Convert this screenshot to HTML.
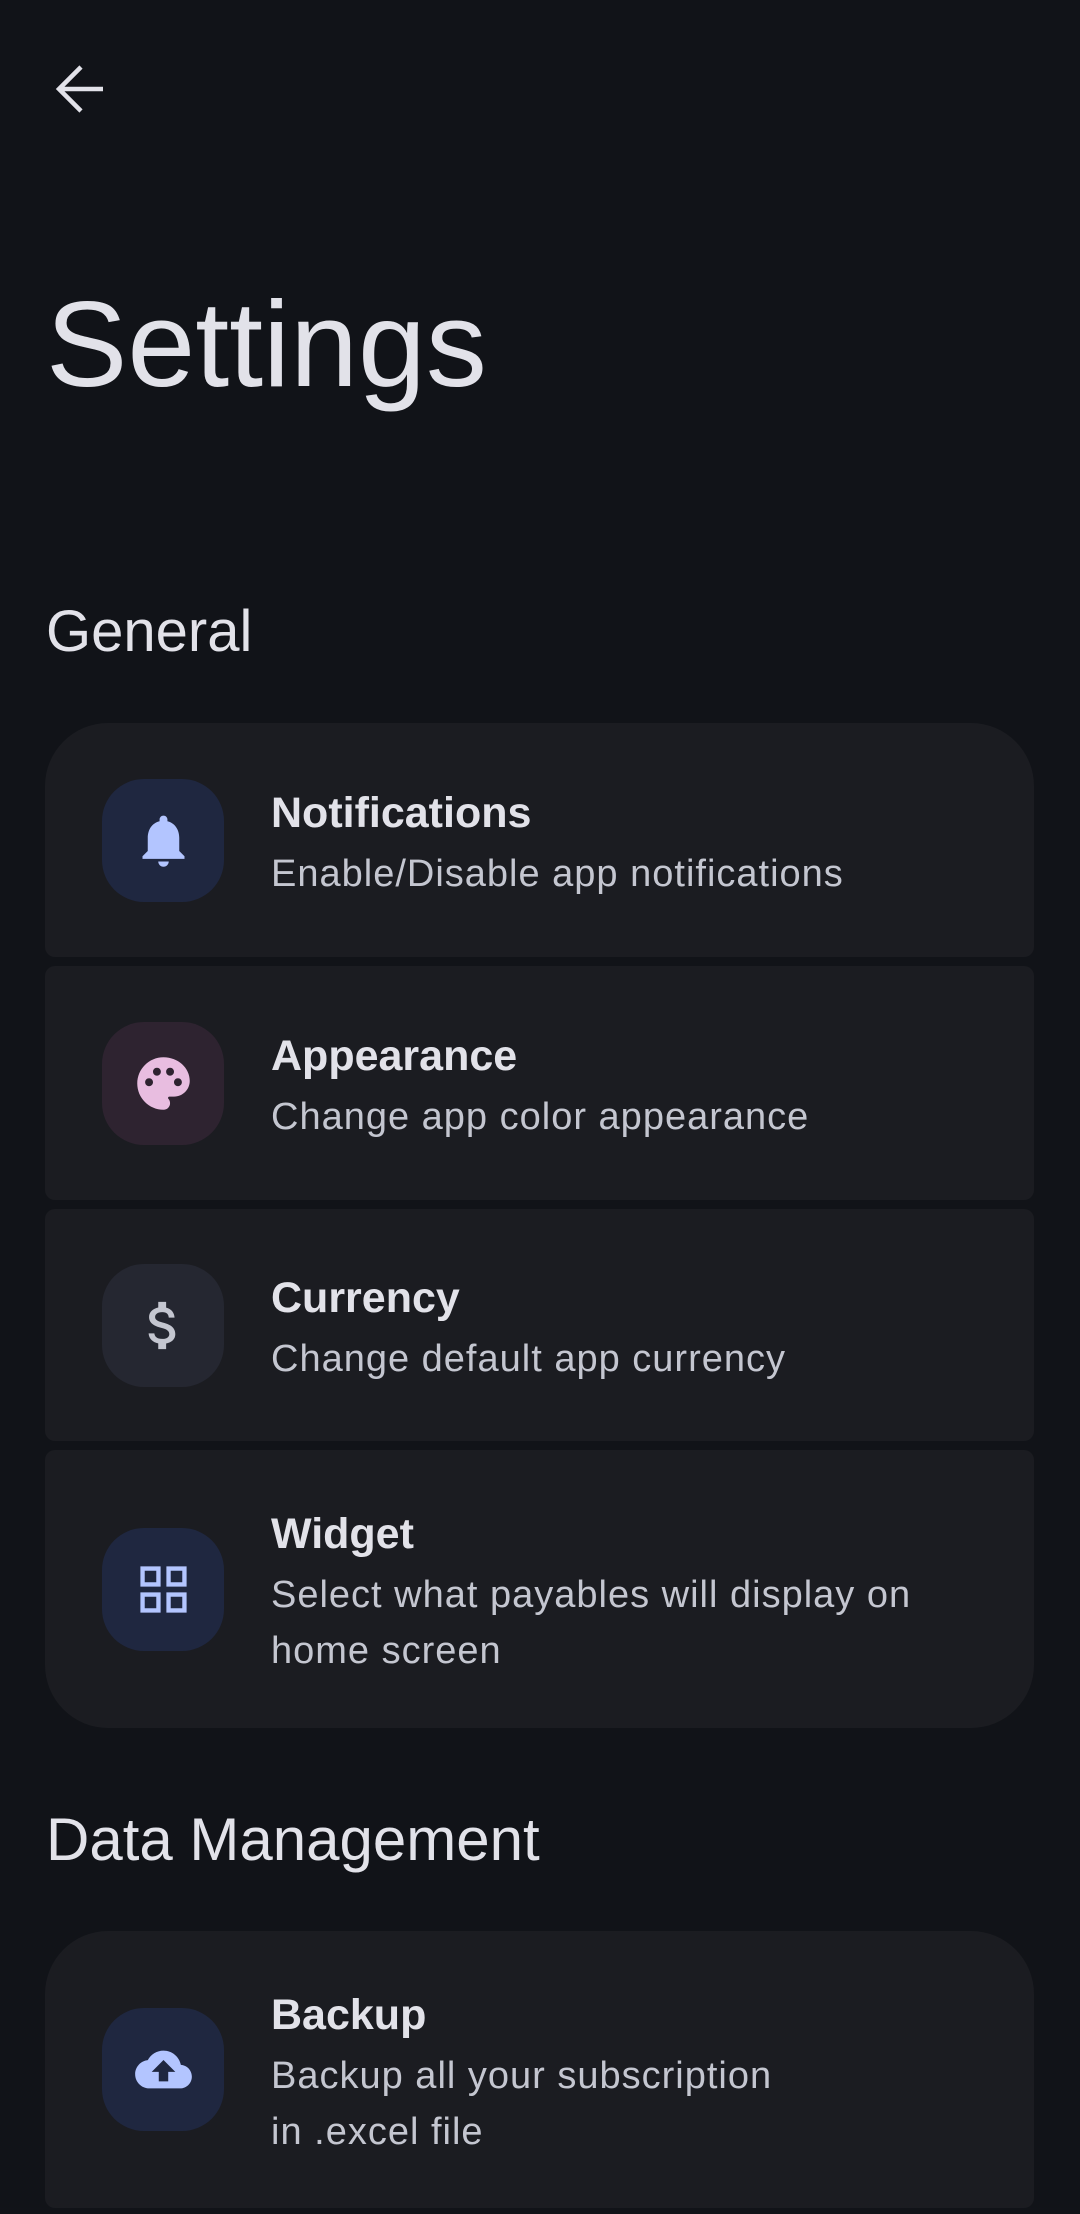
<!DOCTYPE html>
<html><head><meta charset="utf-8"><style>
*{margin:0;padding:0;box-sizing:border-box}
body{width:1080px;height:2214px;background:#111318;font-family:"Liberation Sans",sans-serif;color:#e2e2e9;position:relative;overflow:hidden}
.abs{position:absolute}
.h1{left:46px;top:274px;font-size:122px;line-height:140px;white-space:nowrap}
.h2{font-size:58px;line-height:70px;left:46px;white-space:nowrap}
.item{position:absolute;left:45px;width:989px;background:#1b1c21;border-radius:10px;display:flex;align-items:center}
.ib{position:absolute;left:57px;width:122px;height:123px;border-radius:42px;display:flex;align-items:center;justify-content:center}
.tx{position:absolute;left:226px;padding-top:6px}
.t{font-size:43px;line-height:58px;font-weight:bold;white-space:nowrap}
.s{font-size:38px;line-height:56px;color:#c4c6d0;margin-top:4px;white-space:nowrap;letter-spacing:1px}
</style></head><body>
<svg class="abs" style="left:54px;top:64px" width="52" height="50" viewBox="0 0 52 50"><path d="M49 25H5M27 3L5 25l22 22" fill="none" stroke="#e2e2e9" stroke-width="4.5"/></svg>
<div class="abs h1">Settings</div>
<div class="abs h2" style="top:597px">General</div>

<div class="item" style="top:723px;height:234px;border-radius:63px 63px 10px 10px">
 <div class="ib" style="background:#1f2740"><svg width="63" height="63" viewBox="0 0 24 24"><path fill="#b3c5ff" d="M12 22c1.1 0 2-.9 2-2h-4c0 1.1.89 2 2 2zm6-6v-5c0-3.07-1.64-5.640-4.5-6.32V4c0-.83-.67-1.5-1.5-1.5s-1.5.67-1.5 1.5v.68C7.63 5.36 6 7.92 6 11v5l-2 2v1h16v-1l-2-2z"/></svg></div>
 <div class="tx"><div class="t">Notifications</div><div class="s">Enable/Disable app notifications</div></div>
</div>
<div class="item" style="top:966px;height:234px">
 <div class="ib" style="background:#2e2330"><svg width="63" height="63" viewBox="0 0 24 24"><path fill="#e8bde0" d="M12 2C6.49 2 2 6.49 2 12s4.490 10 10 10c1.38 0 2.5-1.12 2.5-2.5 0-.61-.23-1.2-.64-1.670-.08-.1-.13-.21-.13-.33 0-.28.22-.5.5-.5H16c3.31 0 6-2.69 6-6 0-4.96-4.49-9-10-9zm-5.5 11c-.83 0-1.5-.67-1.5-1.5S5.67 10 6.5 10s1.5.67 1.5 1.5S7.33 13 6.5 13zm3-4C8.67 9 8 8.33 8 7.5S8.67 6 9.5 6s1.5.67 1.5 1.5S10.33 9 9.5 9zm5 0c-.83 0-1.5-.67-1.5-1.5S13.67 6 14.5 6s1.5.67 1.5 1.5S15.33 9 14.5 9zm3 4c-.83 0-1.5-.67-1.5-1.5s.67-1.5 1.5-1.5 1.5.67 1.5 1.5-.67 1.5-1.5 1.5z"/></svg></div>
 <div class="tx"><div class="t">Appearance</div><div class="s">Change app color appearance</div></div>
</div>
<div class="item" style="top:1209px;height:232px">
 <div class="ib" style="background:#252731"><svg width="63" height="63" viewBox="0 0 24 24"><path fill="#c4c6d0" d="M11.8 10.9c-2.27-.59-3-1.2-3-2.15 0-1.09 1.01-1.85 2.7-1.85 1.78 0 2.44.85 2.5 2.1h2.21c-.07-1.72-1.12-3.3-3.210-3.81V3h-3v2.16c-1.94.42-3.5 1.68-3.5 3.61 0 2.31 1.91 3.46 4.7 4.13 2.5.6 3 1.48 3 2.41 0 .69-.49 1.790-2.7 1.79-2.06 0-2.87-.92-2.98-2.1h-2.2c.12 2.19 1.76 3.42 3.68 3.83V21h3v-2.15c1.95-.37 3.5-1.5 3.5-3.55 0-2.84-2.43-3.81-4.7-4.4z"/></svg></div>
 <div class="tx"><div class="t">Currency</div><div class="s">Change default app currency</div></div>
</div>
<div class="item" style="top:1450px;height:278px;border-radius:10px 10px 63px 63px">
 <div class="ib" style="background:#1f2740"><svg width="63" height="63" viewBox="0 0 24 24"><path fill="#b3c5ff" d="M4 4v7h7V4H4zm5.5 5.5h-4v-4h4v4zM4 13v7h7v-7H4zm5.5 5.5h-4v-4h4v4zM13 4v7h7V4h-7zm5.5 5.5h-4v-4h4v4zM13 13v7h7v-7h-7zm5.5 5.5h-4v-4h4v4z" transform="translate(12 12) scale(1.1) translate(-12 -12)"/></svg></div>
 <div class="tx"><div class="t">Widget</div><div class="s">Select what payables will display on<br>home screen</div></div>
</div>

<div class="abs h2" style="top:1805px;font-size:60px">Data Management</div>

<div class="item" style="top:1931px;height:277px;border-radius:63px 63px 10px 10px">
 <div class="ib" style="background:#1f2740"><svg width="63" height="63" viewBox="0 0 24 24"><path fill="#b3c5ff" d="M19.35 10.04C18.67 6.59 15.64 4 12 4 9.11 4 6.6 5.64 5.35 8.04 2.34 8.36 0 10.91 0 14c0 3.31 2.69 6 6 6h13c2.76 0 5-2.240 5-5 0-2.64-2.05-4.78-4.65-4.96zM14 13v4h-4v-4H7l5-5 5 5h-3z" transform="translate(12 12) scale(.9) translate(-12 -12)"/></svg></div>
 <div class="tx"><div class="t">Backup</div><div class="s">Backup all your subscription<br>in .excel file</div></div>
</div>
</body></html>
